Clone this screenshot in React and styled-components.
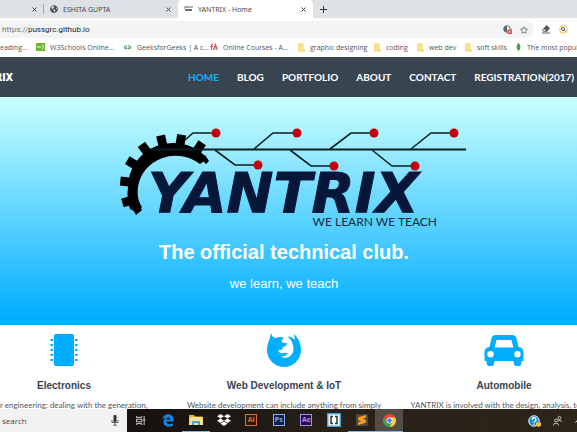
import React from "react";
import styled, { createGlobalStyle, css } from "styled-components";
import { FaDropbox, FaGlobeAmericas, FaRegStar } from "react-icons/fa";
import { SiSublimetext } from "react-icons/si";

const GlobalStyle = createGlobalStyle`
  *, *::before, *::after { box-sizing: border-box; }
  html, body { margin: 0; height: 100%; overflow: hidden; background: #fff; }
  #root { height: 100%; }
  button, input { font: inherit; color: inherit; border: 0; padding: 0; margin: 0; background: none; }
  a { color: inherit; text-decoration: none; }
  svg { display: block; flex: none; }
`;

const Screen = styled.div`
  height: 100vh;
  display: flex;
  flex-direction: column;
  overflow: hidden;
  font-family: "Open Sans", "Noto Sans", sans-serif;
`;

/* Browser chrome */
const TabStrip = styled.div`
  flex: none;
  display: flex;
  height: 18px;
  background: #dee1e6;
  font-family: "Noto Sans", sans-serif;
  font-size: 7px;
  color: #45494e;
`;
const Tab = styled.div`
  flex: 0 0 ${(p) => p.$width}px;
  display: flex;
  align-items: center;
  justify-content: space-between;
  padding: 0 6px;
  border-radius: 4px 4px 0 0;
  ${(p) => p.$active && css`background: #fff;`}
  ${(p) => p.$divided && css`
    border-radius: 0;
    background: linear-gradient(#a4a8ad, #a4a8ad) right center / 1px 10px no-repeat;
  `}
`;
const TabLabel = styled.button`
  display: flex;
  align-items: center;
  gap: 5px;
  white-space: nowrap;
`;
const IconButton = styled.button`
  display: flex;
  align-items: center;
  justify-content: center;
  width: ${(p) => p.$size || 8}px;
  height: ${(p) => p.$size || 8}px;
`;
const NewTab = styled(IconButton)`
  align-self: center;
  margin-left: 6px;
`;

const Toolbar = styled.div`
  flex: none;
  display: flex;
  align-items: center;
  gap: 7px;
  height: 21px;
  padding: 2px 0 0;
`;
const AddressBar = styled.div`
  flex: 0 1 534px;
  display: flex;
  align-items: center;
  height: 17px;
  padding: 0 5px 0 2px;
  border-radius: 0 9px 9px 0;
  background: #f1f3f4;
  font-family: Roboto, sans-serif;
  font-size: 8px;
`;
const Scheme = styled.label`
  color: #74787d;
`;
const Address = styled.input`
  flex: 1;
  min-width: 0;
  color: #24272b;
  outline: none;
`;
const Actions = styled.div`
  display: flex;
  gap: 7px;
`;

const Bookmarks = styled.nav`
  flex: none;
  display: flex;
  align-items: center;
  height: 18px;
  padding-bottom: 2px;
  font-family: "Open Sans", sans-serif;
  font-size: 7px;
  color: #505459;
  white-space: nowrap;
`;
const Bookmark = styled.a`
  flex: 0 0 ${(p) => p.$width}px;
  display: flex;
  align-items: center;
  gap: ${(p) => p.$gap || 5}px;
`;

/* Site */
const Site = styled.main`
  flex: 1;
  min-height: 0;
  overflow: hidden;
  margin: 0 -37px 0 -46px;
`;
const SiteNav = styled.header`
  display: flex;
  align-items: center;
  height: 40px;
  background: #394451;
  color: #fff;
  font-family: Lato, sans-serif;
  font-weight: 700;
  font-size: 10px;
  white-space: nowrap;
`;
const Brand = styled.a`
  flex: 0 0 59px;
  text-align: right;
  font-family: "Open Sans", sans-serif;
  font-weight: 800;
`;
const NavLinks = styled.nav`
  display: flex;
  gap: 18px;
  margin-left: 175px;
`;
const NavLink = styled.a`
  color: ${(p) => (p.$current ? "#18aefc" : "#fff")};
`;

const Hero = styled.section`
  display: flex;
  flex-direction: column;
  align-items: center;
  height: 228px;
  padding-top: 28px;
  background: linear-gradient(#cbffff 0%, #00aeff 97%);
  color: #fff;
  font-family: "Liberation Sans", Arial, sans-serif;
`;
const HeroTitle = styled.h1`
  margin: 10px 0 0;
  font-size: 20px;
  line-height: 24px;
`;
const HeroText = styled.p`
  margin: 12px 0 0;
  font-size: 13px;
  line-height: 16px;
`;

const Topics = styled.section`
  display: grid;
  grid-template-columns: repeat(3, 1fr);
  background: #fff;
`;
const Topic = styled.article`
  display: flex;
  flex-direction: column;
  align-items: center;
  padding-top: 6px;
  color: #00aeff;
`;
const TopicIcon = styled.div`
  display: flex;
  align-items: center;
  height: 38px;
`;
const TopicTitle = styled.h2`
  margin: 11px 0 0;
  font: 700 10px/12px "Liberation Sans", Arial, sans-serif;
  color: #394451;
`;
const TopicText = styled.p`
  margin: 7px 0 0;
  font: 400 8px/12px Lato, sans-serif;
  color: #50565e;
  white-space: nowrap;
`;

/* Taskbar */
const Taskbar = styled.footer`
  flex: none;
  display: flex;
  height: 23px;
  background: linear-gradient(90deg, #14110f 22%, #29211a 60%, #2e2418);
`;
const SearchBox = styled.label`
  flex: 0 0 125px;
  display: flex;
  align-items: center;
  padding: 0 8px 0 2px;
  background: #f2f2f2;
  color: #44474a;
  font-size: 8px;
`;
const SearchInput = styled.input`
  flex: 1;
  min-width: 0;
  outline: none;
  &::placeholder { color: #44474a; opacity: 1; }
`;
const Apps = styled.div`
  flex: 0 0 276px;
  display: flex;
`;
const AppButton = styled.button`
  flex: 1 1 0;
  min-width: 0;
  display: flex;
  align-items: center;
  justify-content: center;
  border-bottom: 1px solid ${(p) => (p.$running ? "#76b9ed" : "transparent")};
  background: ${(p) => (p.$active ? "#544d45" : "transparent")};
`;
const AdobeTile = styled.span`
  width: 12px;
  height: 12px;
  border: 1px solid ${(p) => p.$ink};
  background: ${(p) => p.$paper};
  color: ${(p) => p.$ink};
  font-size: 7px;
  font-weight: 700;
  line-height: 10px;
`;
const Tray = styled.div`
  display: flex;
  align-items: center;
  gap: 12px;
  margin-left: auto;
  margin-right: -6px;
`;

const Cross = () => (
  <svg width="5" height="5" viewBox="0 0 5 5" stroke="#45494e" strokeWidth="1">
    <path d="M.5.5l4 4M4.500.5l-4 4" />
  </svg>
);
const Folder = () => (
  <svg width="7" height="9" viewBox="0 0 7 9">
    <path d="M0 .5h5.500v6H7v2H0z" fill="#f5cf69" />
    <path d="M0 .5h5V8H0z" fill="#fbdf8a" />
  </svg>
);
const Chip = () => (
  <svg width="30" height="32" viewBox="0 0 30 32" fill="currentColor">
    <rect x="5" y="0" width="20" height="32" rx="2" />
    {[6, 11, 16, 21, 26].map((y) => (
      <g key={y}>
        <path d={`M4 ${y - 1}H2v.5H.8v1H2v.5h2z`} />
        <path d={`M26 ${y - 1}h2v.5h1.200v1H28v.5h-2z`} />
      </g>
    ))}
  </svg>
);
const Firefox = () => (
  <svg width="34" height="34" viewBox="0 0 34 34" fill="currentColor">
    <path d="M4 0C5 3 6 4.500 9 5c2.500-1.300 5.500-1.300 8 0-2 1.200-2.600 2.700-2 4.500l5 .8c0 2-2 3-4.500 4.200l-.3 2.500c-1.500-.4-3 0-4.200.8 1 2.200 3.500 3 5.500 2.200 1.800-.6 3-.4 4 .6-1 2.200-3.500 3-6.500 3 6 3.500 12.500-1 12.500-7.600 0-5.500-2.500-9.500-6-12.500 3 0 5.500 1.500 7.200 3.500.1-2-.2-4-1.200-6C31 4 34 10.500 34 17A17 17 0 0 1 0 17C0 10.500 3 7 4 0z" />
  </svg>
);
const Car = () => (
  <svg width="40" height="32" viewBox="0 0 40 32" fill="currentColor">
    <path
      fillRule="evenodd"
      d="M12 1h16c3 0 4 1.500 4.600 4l2 8c3 .3 4.900 2.300 4.900 5v8c0 .6-.4 1-1 1h-1v1.500a3.900 3.900 0 0 1-7.800 0V27H10.300v1.500a3.900 3.900 0 0 1-7.800 0V27h-1c-.6 0-1-.4-1-1v-8c0-2.700 1.900-4.700 4.900-5l2-8C8 2.500 9 1 12 1zm.6 5-2 7.500h18.800l-2-7.500zM6.500 17a3.200 3.200 0 1 0 0 6.400 3.200 3.200 0 0 0 0-6.400zm27 0a3.200 3.200 0 1 0 0 6.400 3.200 3.200 0 0 0 0-6.400z"
    />
  </svg>
);
const Edge = () => (
  <svg width="12" height="13" viewBox="0 0 12 13">
    <path
      fillRule="evenodd"
      d="M.3 5.800C.8 2.300 3 .3 6.200.3c3.500 0 5.500 2.500 5.500 5.700v1.500H4.200c.2 2 1.800 2.700 3.500 2.700 1.200 0 2.300-.3 3.400-1v2.600c-1.200.7-2.600 1-4 1C3.700 12.800 1.500 10.700 1.500 8c0-1.900 1-3.500 2.800-4.400C2.500 3.800 1.200 4.500.3 5.800zM4.300 5.400h4c0-1.300-.7-2-1.900-2s-1.900.8-2.100 2z"
      fill="#1683dc"
    />
  </svg>
);
const Chrome = () => (
  <svg width="13" height="13" viewBox="0 0 26 26">
    <path d="M13 13 1.700 6.500A13 13 0 0 1 24.300 6.500z" fill="#e5483a" />
    <path d="M13 13 24.300 6.500A13 13 0 0 1 13 26z" fill="#fbce3f" />
    <path d="M13 13v13A13 13 0 0 1 1.700 6.500z" fill="#34a353" />
    <path d="M13 7h11.500l-6 9z" fill="#fbce3f" />
    <path d="M1.700 6.500 7.500 16l5.500-9H2z" fill="#e5483a" />
    <path d="m7 16 6 10 5.500-10z" fill="#34a353" />
    <circle cx="13" cy="13" r="6" fill="#fff" />
    <circle cx="13" cy="13" r="4.700" fill="#4286ef" />
  </svg>
);

const teeth = [197, 173, 149, 126, 103, 80, 56];
const branches = [
  [185, 140, 193, 133, 216],
  [215, 150, 235, 165, 258],
  [254, 149, 273, 133, 297],
  [290, 150, 311, 166, 334],
  [330, 149, 351, 133, 374],
  [372, 150, 392, 166, 415],
  [411, 149, 431, 133, 454],
];
const Logo = () => (
  <svg width="372" height="105" viewBox="98 125 372 105" role="img" aria-label="Yantrix">
    <path
      d="M142 207 136 212 130 209A47 47 0 0 1 128 187 45 44 0 0 1 205 156L207 159 200 164A38 36 0 0 0 138 187C137 194 138 201 142 207z"
      fill="#000"
    />
    {teeth.map((a) => (
      <path key={a} d="M214-5h12v9h-12z" transform={`translate(173 187) rotate(${-a}) translate(-173 0)`} fill="#000" />
    ))}
    <path d="m200 158 6 6 3-3-4-6zM131 206l5 9 6-5-3-6z" fill="#000" />
    <path d="M150 149.500H466" stroke="#0c2024" strokeWidth="2" />
    <text
      x="148"
      y="212"
      fill="#06173a"
      stroke="#06173a"
      strokeWidth="1"
      fontFamily="DejaVu Sans, sans-serif"
      fontWeight="700"
      fontStyle="italic"
      fontSize="56"
    >
      YANTRIX
    </text>
    {branches.map(([x1, y1, x2, y2, x3]) => (
      <g key={x1}>
        <path d={`M${x1} ${y1}L${x2} ${y2}H${x3}`} fill="none" stroke="#0c2024" strokeWidth="1.600" />
        <circle cx={x3} cy={y2} r="4.500" fill="#c40008" />
      </g>
    ))}
    <text x="437" y="226" textAnchor="end" fill="#182a3a" fontFamily="Lato, sans-serif" fontSize="12">
      WE LEARN WE TEACH
    </text>
  </svg>
);

const topics = [
  { title: "Electronics", text: "Power engineering: dealing with the generation,", icon: <Chip /> },
  { title: "Web Development & IoT", text: "Website development can include anything from simply", icon: <Firefox /> },
  { title: "Automobile", text: "YANTRIX is involved with the design, analysis, testing", icon: <Car /> },
];
const links = ["HOME", "BLOG", "PORTFOLIO", "ABOUT", "CONTACT", "REGISTRATION(2017)"];

export default function App() {
  return (
    <Screen>
      <GlobalStyle />
      <TabStrip>
        <Tab $width={44} $divided>
          <span />
          <IconButton aria-label="Close tab"><Cross /></IconButton>
        </Tab>
        <Tab $width={134}>
          <TabLabel><FaGlobeAmericas size={8} />ESHITA GUPTA</TabLabel>
          <IconButton aria-label="Close tab"><Cross /></IconButton>
        </Tab>
        <Tab $width={135} $active>
          <TabLabel>
            <svg width="9" height="6" viewBox="0 0 9 6">
              <path d="M0 3a2 2 0 0 1 3-2M2 1h7" fill="none" stroke="#666" />
              <path d="M1 3h7v2H1z" fill="#686e7c" />
            </svg>
            YANTRIX - Home
          </TabLabel>
          <IconButton aria-label="Close tab"><Cross /></IconButton>
        </Tab>
        <NewTab aria-label="New tab">
          <svg width="7" height="7" viewBox="0 0 7 7" stroke="#34383c"><path d="M3.500 0v7M0 3.500h7" /></svg>
        </NewTab>
      </TabStrip>

      <Toolbar>
        <AddressBar>
          <Scheme htmlFor="address">https://</Scheme>
          <Address id="address" defaultValue="pussgrc.github.io" />
          <Actions>
            <IconButton $size={10} aria-label="Blocked content">
              <svg width="9" height="9" viewBox="0 0 9 9">
                <circle cx="4" cy="4" r="3.300" fill="#fff" stroke="#5f6368" />
                <path d="M4 1a3 3 0 0 0 0 6z" fill="#5f6368" />
                <path d="M4.500 4.500H9V9H4.500z" fill="#d94b4b" />
                <path d="m5.700 5.700 2 2m0-2-2 2" stroke="#fff" strokeWidth=".7" />
              </svg>
            </IconButton>
            <IconButton $size={10} aria-label="Bookmark this page"><FaRegStar size={8} color="#5f6368" /></IconButton>
          </Actions>
        </AddressBar>
        <Actions>
          <IconButton $size={10} aria-label="Eraser">
            <svg width="10" height="9" viewBox="0 0 10 9">
              <path d="M5.500 0 9 3.300 6 6.800H2.500L1 5z" fill="#55595e" />
              <path d="m2.800 3.500 3 2.800H2.700L1.500 5z" fill="#fff" stroke="#55595e" strokeWidth=".6" />
              <path d="M1 8h8" stroke="#55595e" />
            </svg>
          </IconButton>
          <IconButton $size={10} aria-label="Search extension">
            <svg width="9" height="9" viewBox="0 0 9 9">
              <circle cx="4.500" cy="4.500" r="3.900" fill="#fff" stroke="#e9c52e" />
              <circle cx="4" cy="4" r="1.500" fill="none" stroke="#6a4b69" />
              <path d="m5 5 1.700 1.700" stroke="#6a4b69" />
            </svg>
          </IconButton>
        </Actions>
      </Toolbar>

      <Bookmarks aria-label="Bookmarks">
        <Bookmark href="#reading" $width={36}>eading...</Bookmark>
        <Bookmark href="#w3schools" $width={87}>
          <svg width="9" height="8" viewBox="0 0 9 8">
            <path d="M0 0h9v8H0z" fill="#6cb52d" />
            <path d="M1 3l1 2 1-2 1 2 1-2M6 2h1.500L6.500 4l1 .5-.5 1.500H6" fill="none" stroke="#e6f5da" strokeWidth=".7" />
          </svg>
          W3Schools Online...
        </Bookmark>
        <Bookmark href="#geeksforgeeks" $width={87}>
          <svg width="9" height="7" viewBox="0 0 9 7" fill="none" stroke="#4c9e60">
            <path d="M4 2H2a1.500 1.500 0 1 0 2 2.500V4H1M5 2h2a1.500 1.500 0 1 1-2 2.500V4h3" />
          </svg>
          GeeksforGeeks | A c...
        </Bookmark>
        <Bookmark href="#courses" $width={88}>
          <svg width="8" height="8" viewBox="0 0 8 8" fill="none" stroke="#d9534f" strokeWidth="1.200">
            <path d="M3 1 1.500 2v5M0 3.500h3M3.500 7l2-5.500L7.300 7M4 5h3" />
          </svg>
          Online Courses - A...
        </Bookmark>
        <Bookmark href="#graphic-designing" $width={76}><Folder />graphic designing</Bookmark>
        <Bookmark href="#coding" $width={43}><Folder />coding</Bookmark>
        <Bookmark href="#web-dev" $width={48}><Folder />web dev</Bookmark>
        <Bookmark href="#soft-skills" $width={51}><Folder />soft skills</Bookmark>
        <Bookmark href="#popular" $width={80} $gap={6}>
          <svg width="5" height="8" viewBox="0 0 5 8"><path d="M2.500 0C5 2 5 5.500 2.500 8 0 5.500 0 2 2.500 0z" fill="#46a142" /></svg>
          The most popular
        </Bookmark>
      </Bookmarks>

      <Site>
        <SiteNav>
          <Brand href="#home">YANTRIX</Brand>
          <NavLinks>
            {links.map((label, i) => (
              <NavLink key={label} href={`#${label.toLowerCase()}`} $current={i === 0}>{label}</NavLink>
            ))}
          </NavLinks>
        </SiteNav>
        <Hero>
          <Logo />
          <HeroTitle>The official technical club.</HeroTitle>
          <HeroText>we learn, we teach</HeroText>
        </Hero>
        <Topics>
          {topics.map((t) => (
            <Topic key={t.title}>
              <TopicIcon>{t.icon}</TopicIcon>
              <TopicTitle>{t.title}</TopicTitle>
              <TopicText>{t.text}</TopicText>
            </Topic>
          ))}
        </Topics>
      </Site>

      <Taskbar>
        <SearchBox>
          <SearchInput type="text" placeholder="search" aria-label="search" />
          <svg width="8" height="11" viewBox="0 0 8 11">
            <rect x="2.500" y="0" width="3" height="7" rx="1" fill="#333" />
            <path d="M1 5v2.500h6V5M4 8v2M2.500 10.300h3" fill="none" stroke="#333" strokeWidth=".8" />
          </svg>
        </SearchBox>
        <Apps>
          <AppButton aria-label="Task view">
            <svg width="10" height="9" viewBox="0 0 11 10" fill="none" stroke="#ddd">
              <path d="M.5 0v1.500h6V0M.5 3.500h6v3h-6zM.5 10V8.500h6V10M9 0v10M8 4.500h2.500" />
            </svg>
          </AppButton>
          <AppButton aria-label="Edge"><Edge /></AppButton>
          <AppButton aria-label="File Explorer" $running>
            <svg width="14" height="12" viewBox="0 0 14 12">
              <path d="M0 1h5l1 1.500h7V11H0z" fill="#e9b93c" />
              <path d="M1 3h13v8H0z" fill="#fbe189" />
              <path d="M3 11V7h8v4H9V9H5v2z" fill="#46a9d5" />
            </svg>
          </AppButton>
          <AppButton aria-label="Dropbox"><FaDropbox size={14} color="#fff" /></AppButton>
          <AppButton aria-label="Illustrator"><AdobeTile $ink="#d9712a" $paper="#30190b">Ai</AdobeTile></AppButton>
          <AppButton aria-label="Photoshop"><AdobeTile $ink="#83b0ee" $paper="#101d4d">Ps</AdobeTile></AppButton>
          <AppButton aria-label="After Effects"><AdobeTile $ink="#a68bea" $paper="#24104f">Ae</AdobeTile></AppButton>
          <AppButton aria-label="Brackets">
            <svg width="14" height="14" viewBox="0 0 14 14">
              <path d="M0 0h14v14H0z" fill="#4aa5d6" />
              <path d="M1.500 1.500h11v11h-11z" fill="#fff" />
              <path d="M6 3.500H4v7h2M8 3.500h2v7H8" fill="none" stroke="#303030" strokeWidth="1.500" />
            </svg>
          </AppButton>
          <AppButton aria-label="Sublime Text" $running>
            <svg width="12" height="12" viewBox="0 0 12 12">
              <rect width="12" height="12" rx="1" fill="#4d4840" />
              <SiSublimetext x="1" y="1" size={10} color="#ff9b18" />
            </svg>
          </AppButton>
          <AppButton aria-label="Chrome" $running $active><Chrome /></AppButton>
        </Apps>
        <Tray>
          <IconButton $size={13} aria-label="Help">
            <svg width="13" height="12" viewBox="0 0 13 12">
              <circle cx="6" cy="6" r="5.300" fill="#1c90c9" stroke="#e8f4fa" />
              <path d="M4.200 4.700a1.900 1.900 0 1 1 2.800 1.600q-1 .4-1 1.300M6 8.700v1" fill="none" stroke="#fff" strokeWidth="1.300" />
              <path d="M8 7.500h5v3.200L10.500 12 8 10.700z" fill="#f2c43a" />
            </svg>
          </IconButton>
          <IconButton $size={9} aria-label="People">
            <svg width="9" height="10" viewBox="0 0 9 10" fill="none" stroke="#ddd" strokeWidth=".8">
              <circle cx="3" cy="4.500" r="1.500" /><path d="M.5 9.500a2.500 2.500 0 0 1 5 0" />
              <circle cx="6.500" cy="2" r="1.500" /><path d="M5 5a2.300 2.300 0 0 1 3.700 1" />
            </svg>
          </IconButton>
          <IconButton $size={9} aria-label="Show hidden icons">
            <svg width="8" height="5" viewBox="0 0 8 5" fill="none" stroke="#ddd"><path d="m.5 4.500 3.500-4 3.500 4" /></svg>
          </IconButton>
        </Tray>
      </Taskbar>
    </Screen>
  );
}
